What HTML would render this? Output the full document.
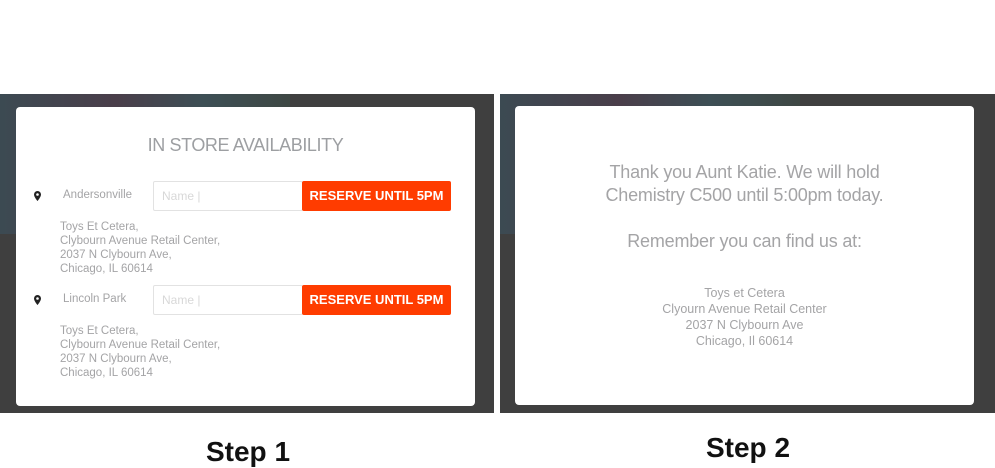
<!DOCTYPE html>
<html><head><style>
body{margin:0;width:995px;height:466px;background:#fff;position:relative;overflow:hidden;font-family:"Liberation Sans",sans-serif}
.bg{position:absolute;top:94px;height:319px;background:#3f3f3f;overflow:hidden}
.img{position:absolute;left:0;top:0;width:290px;height:140px;background:linear-gradient(90deg,#3c4a52,#4a3e4a 40%,#3d4f55 70%,#3e4844);}
.modal{position:absolute;background:#fff;border-radius:4px;color:#a4a4a6}
.t{position:absolute;white-space:nowrap}
.pin{position:absolute;width:7px;height:10px}
.inp{position:absolute;border:1px solid #e2e2e2;border-radius:2px;font-size:12px;color:#d8d8d8;line-height:28px;padding-left:8px;box-sizing:border-box;width:150px;height:30px}
.btn{position:absolute;width:149px;height:30px;background:#ff3c00;color:#fff;font-size:13px;font-weight:bold;line-height:30px;text-align:center;border-radius:2px}
.addr{position:absolute;font-size:11.5px;line-height:14px;color:#a4a4a6}
.step{position:absolute;top:436px;font-size:28px;font-weight:bold;color:#111;width:200px;text-align:center}
</style></head><body>
<div class="bg" style="left:0;width:494px"><div class="img"></div></div>
<div class="bg" style="left:500px;width:495px"><div class="img" style="width:300px"></div></div>

<div class="modal" style="left:16px;top:107px;width:459px;height:299px">
 <div class="t" style="left:0;width:459px;text-align:center;top:28px;font-size:18px;letter-spacing:-0.4px;color:#9d9fa2">IN STORE AVAILABILITY</div>
 <svg class="pin" style="left:18px;top:84px" viewBox="0 0 7 10"><path d="M3.5 0A3.5 3.5 0 0 0 0 3.5C0 6 3.5 10 3.5 10S7 6 7 3.5A3.5 3.5 0 0 0 3.5 0Zm0 2.2a1.3 1.3 0 1 1 0 2.6a1.3 1.3 0 0 1 0-2.6Z" fill="#222"/></svg>
 <div class="t" style="left:47px;top:82px;font-size:11.5px">Andersonville</div>
 <div class="inp" style="left:137px;top:74px">Name |</div>
 <div class="btn" style="left:286px;top:74px">RESERVE UNTIL 5PM</div>
 <div class="addr" style="left:44px;top:113px">Toys Et Cetera,<br>Clybourn Avenue Retail Center,<br>2037 N Clybourn Ave,<br>Chicago, IL 60614</div>
 <svg class="pin" style="left:18px;top:188px" viewBox="0 0 7 10"><path d="M3.5 0A3.5 3.5 0 0 0 0 3.5C0 6 3.5 10 3.5 10S7 6 7 3.5A3.5 3.5 0 0 0 3.5 0Zm0 2.2a1.3 1.3 0 1 1 0 2.6a1.3 1.3 0 0 1 0-2.6Z" fill="#222"/></svg>
 <div class="t" style="left:47px;top:186px;font-size:11.5px">Lincoln Park</div>
 <div class="inp" style="left:137px;top:178px">Name |</div>
 <div class="btn" style="left:286px;top:178px">RESERVE UNTIL 5PM</div>
 <div class="addr" style="left:44px;top:217px">Toys Et Cetera,<br>Clybourn Avenue Retail Center,<br>2037 N Clybourn Ave,<br>Chicago, IL 60614</div>
</div>

<div class="modal" style="left:515px;top:106px;width:459px;height:299px;text-align:center">
 <div class="t" style="left:0;width:459px;top:55px;font-size:18px;line-height:23px;letter-spacing:-0.2px">Thank you Aunt Katie. We will hold<br>Chemistry C500 until 5:00pm today.</div>
 <div class="t" style="left:0;width:459px;top:125px;font-size:18px;letter-spacing:-0.2px">Remember you can find us at:</div>
 <div class="t" style="left:0;width:459px;top:179px;font-size:12.5px;line-height:16px">Toys et Cetera<br>Clyourn Avenue Retail Center<br>2037 N Clybourn Ave<br>Chicago, Il 60614</div>
</div>

<div class="step" style="left:148px">Step 1</div>
<div class="step" style="left:648px;top:432px">Step 2</div>
</body></html>
